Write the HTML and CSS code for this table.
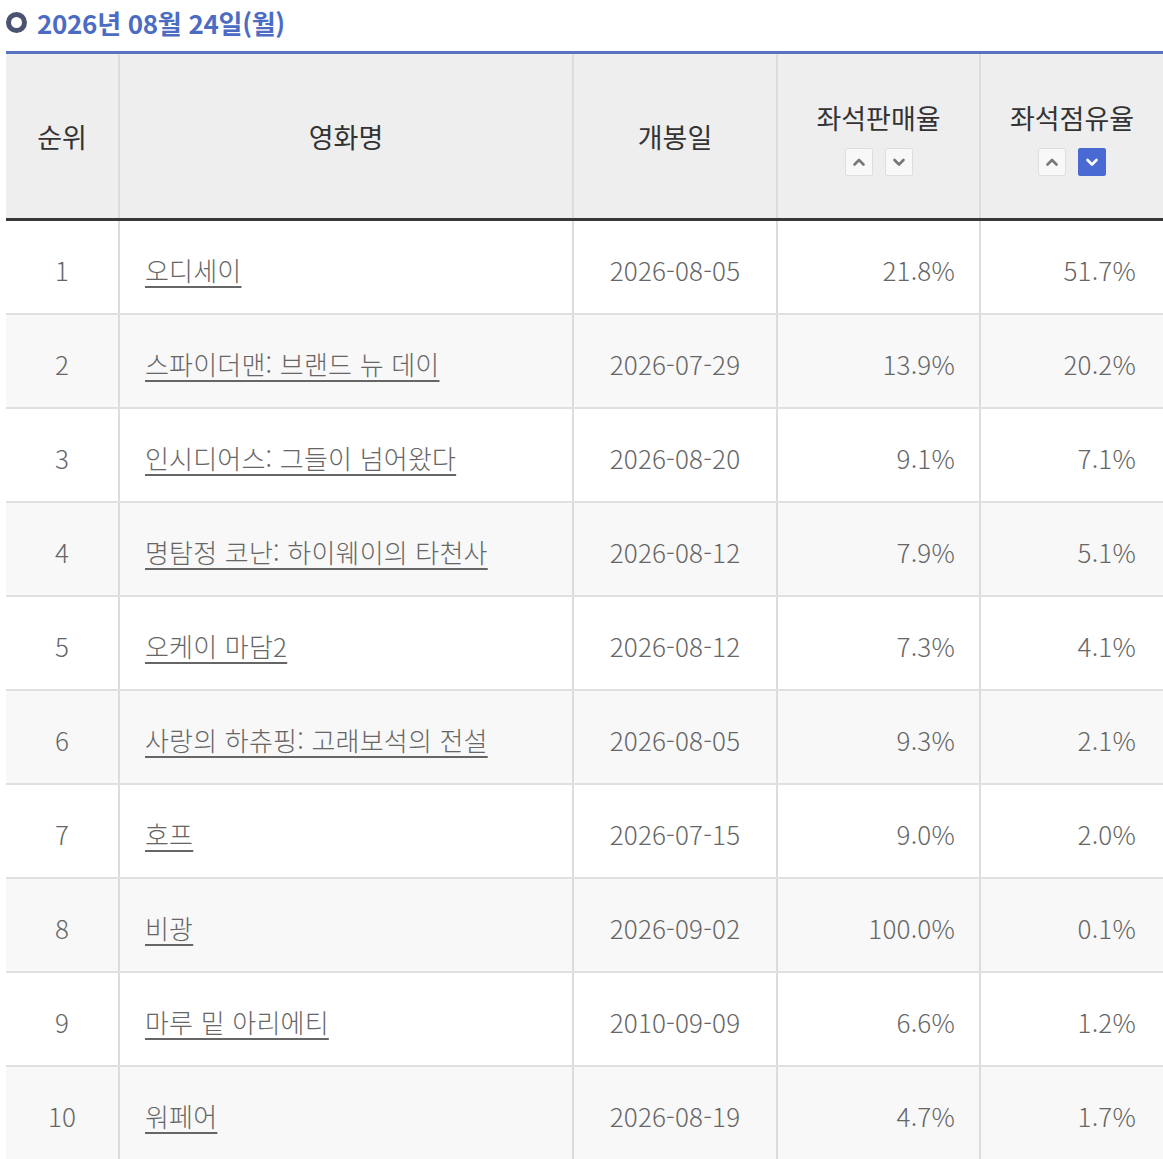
FILE: index.html
```html
<!DOCTYPE html>
<html lang="ko">
<head>
<meta charset="utf-8">
<link rel="stylesheet" href="styles.css">
</head>
<body>
<div class="page">
  <h2 class="title"><span class="ring"></span>2026년 08월 24일(월)</h2>
  <table class="rank">
    <colgroup>
      <col class="c1"><col class="c2"><col class="c3"><col class="c4"><col class="c5">
    </colgroup>
    <thead>
      <tr>
        <th>순위</th>
        <th>영화명</th>
        <th>개봉일</th>
        <th>
          <div class="th-label">좌석판매율</div>
          <div class="sorts">
            <span class="sort"><svg viewBox="0 0 26 26"><path d="M8.5 15.5 L13 11 L17.5 15.5"/></svg></span>
            <span class="sort"><svg viewBox="0 0 26 26"><path d="M8.5 11 L13 15.5 L17.5 11"/></svg></span>
          </div>
        </th>
        <th>
          <div class="th-label">좌석점유율</div>
          <div class="sorts">
            <span class="sort"><svg viewBox="0 0 26 26"><path d="M8.5 15.5 L13 11 L17.5 15.5"/></svg></span>
            <span class="sort on"><svg viewBox="0 0 26 26"><path d="M8.5 11 L13 15.5 L17.5 11"/></svg></span>
          </div>
        </th>
      </tr>
    </thead>
    <tbody>
      <tr><td class="n">1</td><td class="t"><a href="#">오디세이</a></td><td class="d">2026-08-05</td><td class="p">21.8%</td><td class="p">51.7%</td></tr>
      <tr><td class="n">2</td><td class="t"><a href="#">스파이더맨: 브랜드 뉴 데이</a></td><td class="d">2026-07-29</td><td class="p">13.9%</td><td class="p">20.2%</td></tr>
      <tr><td class="n">3</td><td class="t"><a href="#">인시디어스: 그들이 넘어왔다</a></td><td class="d">2026-08-20</td><td class="p">9.1%</td><td class="p">7.1%</td></tr>
      <tr><td class="n">4</td><td class="t"><a href="#">명탐정 코난: 하이웨이의 타천사</a></td><td class="d">2026-08-12</td><td class="p">7.9%</td><td class="p">5.1%</td></tr>
      <tr><td class="n">5</td><td class="t"><a href="#">오케이 마담2</a></td><td class="d">2026-08-12</td><td class="p">7.3%</td><td class="p">4.1%</td></tr>
      <tr><td class="n">6</td><td class="t"><a href="#">사랑의 하츄핑: 고래보석의 전설</a></td><td class="d">2026-08-05</td><td class="p">9.3%</td><td class="p">2.1%</td></tr>
      <tr><td class="n">7</td><td class="t"><a href="#">호프</a></td><td class="d">2026-07-15</td><td class="p">9.0%</td><td class="p">2.0%</td></tr>
      <tr><td class="n">8</td><td class="t"><a href="#">비광</a></td><td class="d">2026-09-02</td><td class="p">100.0%</td><td class="p">0.1%</td></tr>
      <tr><td class="n">9</td><td class="t"><a href="#">마루 밑 아리에티</a></td><td class="d">2010-09-09</td><td class="p">6.6%</td><td class="p">1.2%</td></tr>
      <tr><td class="n">10</td><td class="t"><a href="#">워페어</a></td><td class="d">2026-08-19</td><td class="p">4.7%</td><td class="p">1.7%</td></tr>
    </tbody>
  </table>
</div>
</body>
</html>
```
FILE: styles.css
```css
html, body {
  margin: 0;
  padding: 0;
  background: #fff;
}
body {
  font-family: "Noto Sans CJK KR", "Noto Sans", sans-serif;
}
.page {
  padding-left: 6px;
  overflow: hidden;
  width: 1157px;
}
.title {
  display: flex;
  align-items: center;
  gap: 10px;
  margin: 0;
  height: 44px;
  font-size: 26px;
  font-weight: 700;
  color: #4c6cc4;
  letter-spacing: -0.3px;
}
.ring {
  width: 21px;
  height: 21px;
  box-sizing: border-box;
  border: 5px solid #4b5372;
  border-radius: 50%;
  margin-top: 1px;
  flex: none;
  filter: blur(0.5px);
}
.rank {
  width: 1157px;
  border-collapse: collapse;
  table-layout: fixed;
  margin-top: 7px;
  border-top: 3px solid #5a72c2;
}
.c1 { width: 113px; }
.c2 { width: 454px; }
.c3 { width: 204px; }
.c4 { width: 203px; }
.c5 { width: 183px; }
.rank th {
  background: #eeeeee;
  height: 164px;
  padding: 0;
  font-size: 27px;
  font-weight: 400;
  color: #333;
  text-align: center;
  vertical-align: middle;
  border-left: 2px solid #dcdcdc;
  border-bottom: 3px solid #383838;
}
.rank th:first-child,
.rank td:first-child { border-left: none; }
.th-label {
  margin-top: -4px;
  line-height: 36px;
}
.sorts {
  display: flex;
  justify-content: center;
  gap: 12px;
  margin-top: 12px;
  margin-bottom: -8px;
}
.sort {
  width: 28px;
  height: 28px;
  box-sizing: border-box;
  border: 1px solid #dedede;
  border-radius: 2px;
  background: #f8f8f8;
  display: flex;
}
.sort svg {
  width: 26px;
  height: 26px;
}
.sort path {
  fill: none;
  stroke: #777;
  stroke-width: 2.6;
  stroke-linecap: round;
  stroke-linejoin: round;
}
.sort.on {
  background: #4a6ad3;
  border-color: #4a6ad3;
}
.sort.on path { stroke: #fff; }
.rank td {
  height: 88px;
  padding: 4px 0 0;
  font-size: 26px;
  letter-spacing: 0.2px;
  font-weight: 300;
  color: #666;
  border-left: 2px solid #dcdcdc;
  border-bottom: 2px solid #e0e0e0;
  vertical-align: middle;
  white-space: nowrap;
}
.rank tbody tr:nth-child(even) td { background: #f8f8f8; }
.rank td.n { text-align: center; }
.rank td.t { padding-left: 25px; }
.rank td.t a {
  color: #666;
  text-decoration: underline;
  text-underline-offset: 5px;
  text-decoration-thickness: 1.5px;
}
.rank td.d { text-align: center; }
.rank td.p { text-align: right; padding-right: 24px; }
.rank td.p:last-child { padding-right: 27px; }
```
